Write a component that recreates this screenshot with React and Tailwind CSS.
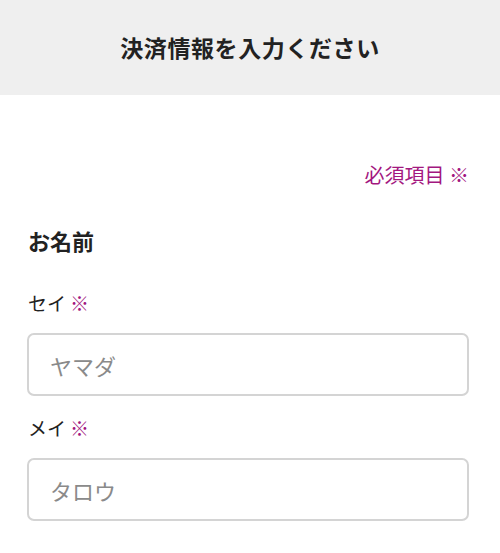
export default function App() {
    const font = { fontFamily: '"Noto Sans CJK JP", "Noto Sans", sans-serif' }
    return (
        <div className="min-h-screen bg-white text-[#222]" style={font}>
            <div className="h-[95px] bg-[#efefef] flex items-center justify-center">
                <h1 className="text-[23px] font-bold tracking-[0.6px]">決済情報を入力ください</h1>
            </div>
            <div className="pl-[27px] pr-[31px]">
                <div className="mt-[65px] h-[30px] flex items-center justify-end text-[20px] text-[#a3177f]">
                    必須項目 ※
                </div>
                <div className="mt-[35px] h-[30px] flex items-center text-[22px] font-bold pl-[1px]">
                    お名前
                </div>
                <div className="mt-[33px] h-[30px] flex items-center text-[19px] pl-[1px]">
                    セイ <span className="ml-[4px] text-[#a3177f]">※</span>
                </div>
                <input
                    className="mt-[15px] block w-full h-[63px] rounded-[7px] border-2 border-[#d4d4d4] px-[21px] text-[22px] placeholder-[#8a8a8a] outline-none"
                    placeholder="ヤマダ"
                />
                <div className="mt-[17px] h-[30px] flex items-center text-[19px] pl-[1px]">
                    メイ <span className="ml-[4px] text-[#a3177f]">※</span>
                </div>
                <input
                    className="mt-[15px] block w-full h-[63px] rounded-[7px] border-2 border-[#d4d4d4] px-[21px] text-[22px] placeholder-[#8a8a8a] outline-none"
                    placeholder="タロウ"
                />
            </div>
        </div>
    )
}
